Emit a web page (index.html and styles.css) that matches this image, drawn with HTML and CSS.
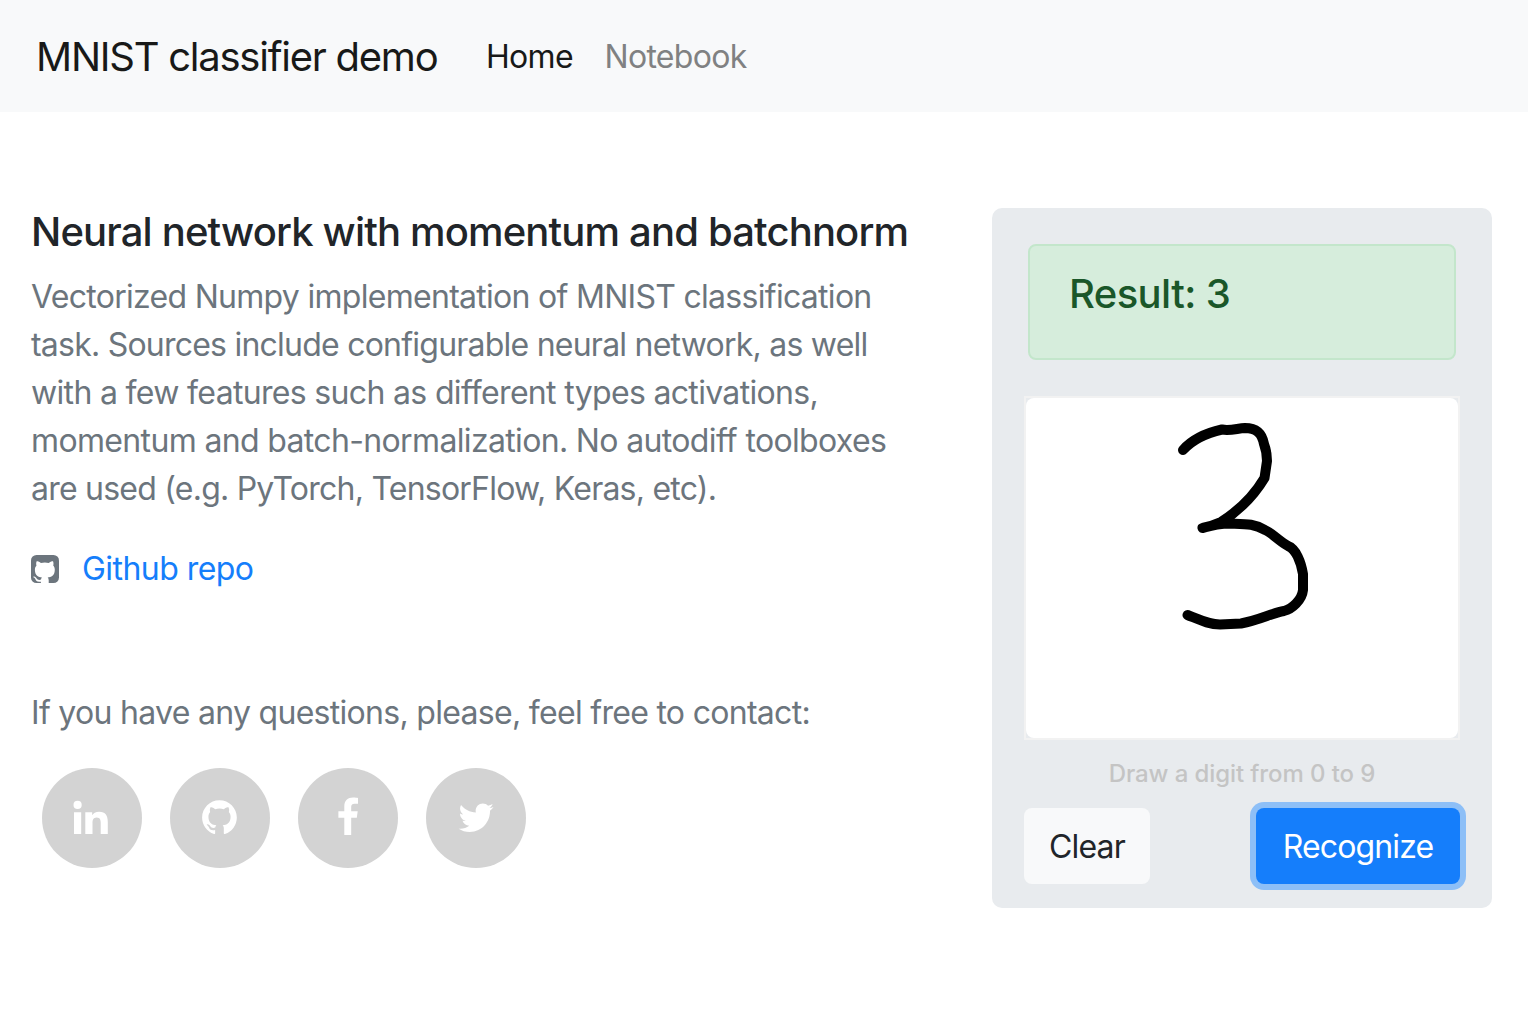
FILE: index.html
```html
<!DOCTYPE html>
<html lang="en">
<head>
<meta charset="utf-8">
<title>MNIST classifier demo</title>
<link rel="stylesheet" href="styles.css">
</head>
<body>
<nav class="navbar">
  <a class="brand">MNIST classifier demo</a>
  <a class="nav-link active">Home</a>
  <a class="nav-link">Notebook</a>
</nav>
<main class="page">
  <section class="about">
    <h1 class="title">Neural network with momentum and batchnorm</h1>
    <p class="description">
      <span class="line l1">Vectorized Numpy implementation of MNIST classification</span>
      <span class="line l2">task. Sources include configurable neural network, as well</span>
      <span class="line l3">with a few features such as different types activations,</span>
      <span class="line l4">momentum and batch-normalization. No autodiff toolboxes</span>
      <span class="line l5">are used (e.g. PyTorch, TensorFlow, Keras, etc).</span>
    </p>
    <p class="repo">
      <svg class="repo-icon" width="28" height="28" viewBox="0 0 28 28"><rect width="28" height="28" rx="5.5" fill="#6c757d"/><path transform="translate(-1.8 -.1) scale(1.95)" fill="#fff" d="M6.02 15.21c0-.19-.01-.82-.01-1.49-2.01.37-2.53-.49-2.69-.94-.09-.23-.48-.94-.82-1.13-.28-.15-.68-.52-.01-.53.63-.01 1.08.58 1.23.82.72 1.21 1.87.87 2.33.66.07-.52.28-.87.51-1.07-1.78-.2-3.64-.89-3.64-3.95 0-.87.31-1.59.82-2.15-.08-.2-.36-1.02.08-2.12 0 0 .67-.21 2.2.82.64-.18 1.32-.27 2-.27s1.36.09 2 .27c1.53-1.04 2.2-.82 2.2-.82.44 1.1.16 1.92.08 2.12.51.56.82 1.27.82 2.15 0 3.07-1.87 3.75-3.65 3.95.29.25.54.73.54 1.48 0 1.07-.01 1.93-.01 2.2z"/></svg>
      <a class="repo-link">Github repo</a>
    </p>
    <p class="contact">If you have any questions, please, feel free to contact:</p>
    <div class="socials">
      <a class="social"><svg width="100" height="100" viewBox="0 0 100 100"><g transform="translate(-2.200 0)"><circle cx="37.8" cy="36.9" r="4.1"/><path d="M34.2 44.2h7.2V66h-7.200zM45.5 44.2h6.900v3c1-1.900 3.400-3.500 6.900-3.500 6.500 0 8.700 4 8.700 10.300V66h-7.100V55.300c0-3-.4-5.900-4-5.900s-4.200 2.800-4.200 5.700V66h-7.200z"/></g></svg></a>
      <a class="social"><svg width="100" height="100" viewBox="0 0 100 100"><path transform="translate(32.1 32.2) scale(2.17)" d="M8 0C3.58 0 0 3.58 0 8c0 3.54 2.29 6.53 5.47 7.59.4.07.55-.17.55-.38 0-.19-.01-.82-.01-1.49-2.01.37-2.53-.49-2.69-.94-.09-.23-.48-.94-.82-1.13-.28-.15-.68-.52-.01-.53.63-.01 1.08.58 1.23.82.72 1.21 1.87.87 2.33.66.07-.52.28-.87.51-1.07-1.78-.2-3.64-.89-3.64-3.95 0-.87.31-1.59.82-2.15-.08-.2-.36-1.02.08-2.12 0 0 .67-.21 2.2.82.64-.18 1.32-.27 2-.27s1.36.09 2 .27c1.53-1.04 2.2-.82 2.2-.82.44 1.1.16 1.92.08 2.12.51.56.82 1.27.82 2.15 0 3.07-1.87 3.75-3.65 3.95.29.25.54.73.54 1.48 0 1.07-.01 1.93-.01 2.2 0 .21.15.46.55.38A8.01 8.01 0 0 0 16 8c0-4.42-3.58-8-8-8z"/></svg></a>
      <a class="social"><svg width="100" height="100" viewBox="0 0 100 100"><path d="M60 30.1v5.700h-3.300c-2.900 0-3.500 1.400-3.500 3.300v4.200h6.500l-.9 6.500h-5.600V67h-6.900V49.800h-5.900v-6.500h5.900v-4.900c0-5.700 3.500-8.800 8.700-8.800 2.300 0 4.300.2 5 .5z"/></svg></a>
      <a class="social"><svg width="100" height="100" viewBox="0 0 100 100"><path transform="translate(32.6 32.3) scale(.0683)" d="M459.370 151.716c.325 4.548.325 9.097.325 13.645 0 138.720-105.583 298.558-298.558 298.558-59.452 0-114.680-17.219-161.137-47.106 8.447.974 16.568 1.299 25.340 1.299 49.055 0 94.213-16.568 130.274-44.832-46.132-.975-84.792-31.188-98.112-72.772 6.498.974 12.995 1.624 19.818 1.624 9.421 0 18.843-1.300 27.614-3.573-48.081-9.747-84.143-51.980-84.143-102.985v-1.299c13.969 7.797 30.214 12.670 47.431 13.319-28.264-18.843-46.781-51.005-46.781-87.391 0-19.492 5.197-37.360 14.294-52.954 51.655 63.675 129.300 105.258 216.365 109.807-1.624-7.797-2.599-15.918-2.599-24.040 0-57.828 46.782-104.934 104.934-104.934 30.213 0 57.502 12.670 76.670 33.137 23.715-4.548 46.456-13.320 66.599-25.340-7.798 24.366-24.366 44.833-46.132 57.827 21.117-2.273 41.584-8.122 60.426-16.243-14.292 20.791-32.161 39.308-52.628 54.253z"/></svg></a>
    </div>
  </section>
  <section class="card">
    <div class="alert"><span class="result">Result: 3</span></div>
    <div class="board"><div class="paper">
      <svg class="digit" width="432" height="340" viewBox="1026 398 432 340"><path d="M1183 450C1191 441 1202 434 1222 429.500C1230 431 1237 428.500 1245 428C1256 428 1262 433 1264 444Q1267 452 1267 461L1264.500 478C1255 494 1243 508 1221 522Q1212 526 1202.500 528Q1218 523.500 1230 523.500C1246 524 1254 523.500 1265 530C1272 533 1279 541 1288 546C1296 549 1301 562 1303 574V590C1302 600 1292 609 1284 611C1272 613 1260 620 1241 623.500L1220 624.500C1209 624.500 1200 620 1187.500 615"/></svg>
    </div></div>
    <div class="hint">Draw a digit from 0 to 9</div>
    <div class="actions">
      <button class="btn clear">Clear</button>
      <button class="btn recognize">Recognize</button>
    </div>
  </section>
</main>
</body>
</html>
```
FILE: styles.css
```css
* { box-sizing: border-box; }
body { margin: 0; background: #fff; font-family: Inter, "Liberation Sans", sans-serif; font-size: 32px; line-height: 48px; color: #212529; letter-spacing: -0.7px; }
h1, p { margin: 0; }
.navbar { display: flex; align-items: center; height: 112px; padding: 0 36px; background: #f8f9fa; white-space: nowrap; }
.brand { width: 450px; padding-top: 1px; font-size: 40px; color: #181918; letter-spacing: -1.25px; }
.nav-link { width: 118.5px; padding-top: 2px; color: #808182; }
.nav-link.active { color: #181918; }
.page { display: flex; justify-content: space-between; padding: 96px 36px 0 31px; }
.about { width: 900px; white-space: nowrap; }
.title { font-size: 40px; line-height: 48px; font-weight: 500; margin-bottom: 17px; letter-spacing: -0.84px; }
.description { color: #6c757d; }
.line { display: block; }
.l1 { letter-spacing: -0.71px; }
.l2 { letter-spacing: -0.77px; }
.l3 { letter-spacing: -0.67px; }
.l4 { letter-spacing: -0.65px; }
.l5 { letter-spacing: -0.77px; }
.repo { display: flex; align-items: center; margin-top: 32px; gap: 23px; }
.repo-link { color: #157efb; letter-spacing: -0.55px; }
.contact { color: #6c757d; margin-top: 96px; }
.socials { display: flex; gap: 28px; padding: 31px 0 0 11px; }
.social { width: 100px; height: 100px; border-radius: 50%; background: #d3d3d3; }
.social svg { display: block; fill: #fff; }
.card { width: 500px; height: 700px; padding: 36px 32px 24px; border-radius: 10px; background: #e8ebee; }
.alert { height: 116px; margin: 0 4px 36px; padding: 24px 39px; border: 2px solid #c3e6cb; border-radius: 8px; background: #d6eddc; color: #1a5729; font-size: 40px; font-weight: 500; letter-spacing: -0.6px; }
.board { height: 344px; border: 2px solid #f2f2f2; }
.paper { height: 340px; border-radius: 8px; background: #fff; }
.digit { display: block; fill: none; stroke: #000; stroke-width: 10; stroke-linecap: round; stroke-linejoin: round; }
.hint { height: 68px; padding-top: 10px; text-align: center; color: #c4c4c4; font-size: 24px; font-weight: 500; letter-spacing: -0.1px; }
.actions { display: flex; justify-content: space-between; }
.btn { height: 76px; padding: 2px 0 0; border: 0; border-radius: 8px; font: inherit; letter-spacing: -0.85px; }
.clear { width: 126px; background: #f8f9fa; color: #212529; }
.recognize { width: 204px; background: #157efb; color: #fff; box-shadow: 0 0 0 6px #8dbff7; }
```
